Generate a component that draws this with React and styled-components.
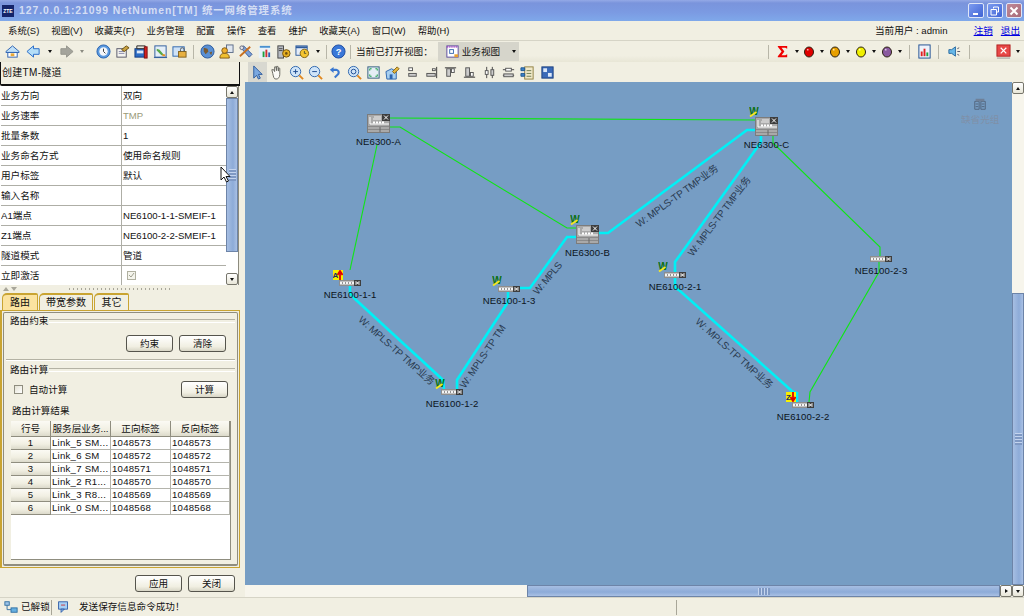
import styled, { createGlobalStyle } from "styled-components";

const FONT = `"Liberation Sans", "Noto Sans CJK SC", sans-serif`;
const CREAM = "#f1efe2";

const GlobalStyle = createGlobalStyle`
  html, body {
    margin: 0;
    padding: 0;
    background: ${CREAM};
  }
  * {
    box-sizing: border-box;
  }
`;

const Window = styled.div`
  position: relative;
  width: 1024px;
  height: 616px;
  display: flex;
  flex-direction: column;
  overflow: hidden;
  background: ${CREAM};
  color: #111;
  font-family: ${FONT};
  font-size: 9.6px;
  line-height: 12px;
`;

/* ---------- title bar ---------- */

const TitleBar = styled.header`
  height: 21px;
  flex: none;
  display: flex;
  align-items: center;
  padding: 0 2px;
  gap: 5px;
  background: linear-gradient(#94a9e6 0, #7a94dc 3px, #7b9ae2 12px, #7fa8ea 100%);
`;

const Logo = styled.div`
  width: 12px;
  height: 12px;
  background: #14246a;
  color: #fff;
  font-size: 5px;
  font-weight: bold;
  line-height: 12px;
  text-align: center;
`;

const TitleText = styled.div`
  flex: 1;
  color: #d4def4;
  font-size: 10.4px;
  font-weight: bold;
  letter-spacing: 0.95px;
  white-space: nowrap;
`;

const WinButtons = styled.div`
  display: flex;
  gap: 3px;
`;

const WinButton = styled.div`
  width: 16px;
  height: 15px;
  display: flex;
  align-items: center;
  justify-content: center;
  border: 1px solid #dfe6f8;
  border-radius: 2px;
  background: ${(p) =>
    p.$close
      ? "linear-gradient(135deg, #c08a98, #a86a78)"
      : "linear-gradient(135deg, #7d9cf0, #3f63d4)"};
`;

/* ---------- menu ---------- */

const MenuBar = styled.nav`
  height: 20px;
  flex: none;
  display: flex;
  align-items: center;
  gap: 12px;
  padding: 0 4px 0 8px;
  border-bottom: 1px solid #d6d4c6;
`;

const MenuItem = styled.span`
  font-size: 9.4px;
  white-space: nowrap;
`;

const UserInfo = styled.div`
  margin-left: auto;
  display: flex;
  width: 145px;
`;

const UserName = styled.span`
  flex: 1;
  white-space: pre;
`;

const UserLink = styled.a`
  margin-left: 8px;
  color: #0000e0;
  text-decoration: underline;
`;

/* ---------- toolbars ---------- */

const MainToolbar = styled.div`
  height: 21px;
  flex: none;
  display: flex;
  align-items: center;
  padding-left: 2px;
  background: linear-gradient(${CREAM} 70%, #e8e6d6);
`;

const ToolButton = styled.span`
  width: ${(p) => p.$w || 19}px;
  height: 20px;
  flex: none;
  display: flex;
  align-items: center;
  justify-content: center;
  background: ${(p) => (p.$active ? "#d8d8d0" : "transparent")};
`;

const Separator = styled.span`
  width: ${(p) => p.$w || 9}px;
  height: 18px;
  flex: none;
  display: flex;
  justify-content: center;

  &::before {
    content: "";
    width: 1px;
    background: #b8b6a8;
    margin: 2px 0;
  }
`;

const Gap = styled.span`
  width: ${(p) => p.$w}px;
  flex: none;
`;

const ViewsCaption = styled.span`
  margin: 0 5px 0 4px;
  white-space: nowrap;
`;

const ViewCombo = styled.div`
  width: 81px;
  height: 19px;
  display: flex;
  align-items: center;
  gap: 2px;
  padding-left: 7px;
  background: #d6d5cb;
  white-space: nowrap;
`;

const ComboCaret = styled.span`
  margin-left: auto;
  margin-right: 3px;
  display: flex;
`;

const RightTools = styled.div`
  margin-left: auto;
  display: flex;
  align-items: center;
  padding-right: 1px;
`;

const CARET_BORDERS = {
  down: (c) => `border-left: 2.5px solid transparent; border-right: 2.5px solid transparent; border-top: 3px solid ${c};`,
  up: (c) => `border-left: 2.5px solid transparent; border-right: 2.5px solid transparent; border-bottom: 3px solid ${c};`,
  right: (c) => `border-top: 2.5px solid transparent; border-bottom: 2.5px solid transparent; border-left: 3px solid ${c};`,
};

const Caret = styled.span`
  width: 0;
  height: 0;
  ${(p) => CARET_BORDERS[p.$dir || "down"](p.$muted ? "#8a8a80" : "#111")}
`;

const ViewToolbar = styled.div`
  height: 20px;
  flex: none;
  display: flex;
  align-items: center;
  padding-left: 3px;
`;

/* ---------- layout ---------- */

const Body = styled.main`
  flex: 1;
  min-height: 0;
  display: flex;
`;

const LeftPanel = styled.aside`
  width: 240px;
  flex: none;
  display: flex;
  flex-direction: column;
`;

const PanelDivider = styled.div`
  width: 5px;
  flex: none;
  background: ${CREAM};
`;

const Workspace = styled.section`
  flex: 1;
  min-width: 0;
  display: flex;
  flex-direction: column;
`;

const PanelHeader = styled.div`
  height: 24px;
  flex: none;
  padding: 5px 0 0 1px;
  border-left: 1px solid #111;
  border-right: 1px solid #111;
  border-bottom: 2px solid #111;
  border-bottom-left-radius: 2px;
  font-size: 10px;
  letter-spacing: 0.3px;
`;

/* ---------- property table ---------- */

const PropWrap = styled.div`
  height: 199px;
  flex: none;
  display: flex;
  margin-right: 1px;
  padding-left: 1px;
  overflow: hidden;
  background: #fff;
  border-right: 1px solid #8d8b7e;
`;

const PropTable = styled.div`
  width: 225px;
  flex: none;
`;

const PropRow = styled.div`
  height: 20px;
  display: grid;
  grid-template-columns: 121px 1fr;
  border-bottom: 1px solid #aeaea6;
`;

const PropCell = styled.div`
  display: flex;
  align-items: center;
  padding-left: ${(p) => (p.$value ? "1px" : "0")};
  border-right: ${(p) => (p.$value ? "none" : "1px solid #aeaea6")};
  color: ${(p) => (p.$dim ? "#9a9a78" : "#111")};
  white-space: nowrap;
  overflow: hidden;
`;

const Scroll = styled.div`
  flex: none;
  display: flex;
  flex-direction: ${(p) => (p.$horizontal ? "row" : "column")};
  ${(p) => (p.$horizontal ? "height: 12px;" : "width: 12px;")}
  background: ${(p) => p.$track || "#f7f5ec"};
`;

const ScrollArrow = styled.div`
  flex: none;
  width: ${(p) => (p.$horizontal ? "12px" : "100%")};
  height: ${(p) => (p.$horizontal ? "100%" : "12px")};
  display: flex;
  align-items: center;
  justify-content: center;
  background: linear-gradient(#fff, #e8e6d8);
  border: 1px solid #77766c;
  border-radius: 2px;
`;

const ScrollSpace = styled.div`
  flex: ${(p) => (p.$size ? `0 0 ${p.$size}px` : "1")};
`;

const ScrollThumb = styled.div`
  flex: ${(p) => (p.$size ? `0 0 ${p.$size}px` : "1")};
  display: flex;
  align-items: center;
  justify-content: center;
  border: 1px solid #6d84a8;
  background: ${(p) =>
    p.$horizontal
      ? "linear-gradient(#a6bee2, #8dabd8 60%, #a9c0e4)"
      : "linear-gradient(90deg, #a6bee2, #8dabd8 60%, #a9c0e4)"};

  &::after {
    content: "";
    ${(p) =>
      p.$horizontal
        ? "width: 12px; height: 7px; background: repeating-linear-gradient(90deg, #c4d4ee 0 1px, #7f99c4 1px 3px);"
        : "width: 7px; height: 12px; background: repeating-linear-gradient(#c4d4ee 0 1px, #7f99c4 1px 3px);"}
  }
`;

const Grip = styled.div`
  height: 8px;
  flex: none;
  display: flex;
  align-items: center;
  gap: 2px;
  padding-left: 3px;
`;

const GripArrow = styled.span`
  width: 0;
  height: 0;
  border-left: 3px solid transparent;
  border-right: 3px solid transparent;
  ${(p) => (p.$up ? "border-bottom" : "border-top")}: 4px solid #a8a69a;
`;

const GripDots = styled.span`
  width: 102px;
  height: 2px;
  margin-left: 50px;
  background: repeating-linear-gradient(90deg, #a8a69a 0 1px, transparent 1px 4px);
`;

/* ---------- tabs ---------- */

const TabStrip = styled.div`
  height: 17px;
  flex: none;
  display: flex;
  padding-left: 2px;
  gap: 1px;
`;

const Tab = styled.div`
  width: ${(p) => p.$w}px;
  display: flex;
  align-items: center;
  justify-content: center;
  border: 1px solid #c9a432;
  border-bottom: none;
  border-top-width: 2px;
  border-radius: 5px 2px 0 0;
  background: ${(p) => (p.$active ? "#fbe3a0" : CREAM)};
  font-size: 10px;
`;

const TabPanel = styled.div`
  height: 258px;
  flex: none;
  padding: 1px;
  border: 1px solid #c9a432;
  border-left-width: 2px;
`;

const Frame = styled.div`
  height: 100%;
  padding: 1px 2px 0;
  border: 1px solid #8f8d7f;
  border-bottom-width: 2px;
  border-radius: 2px;
`;

const GroupTitle = styled.div`
  height: 12px;
  display: flex;
  align-items: center;
  gap: 1px;
  margin-top: ${(p) => p.$top}px;
  padding-left: 4px;
  white-space: nowrap;

  &::after {
    content: "";
    flex: 1;
    height: 2px;
    border-top: 1px solid #b4b2a4;
    border-bottom: 1px solid #fff;
  }
`;

const ButtonRow = styled.div`
  display: flex;
  justify-content: flex-end;
  gap: 6px;
  margin-top: 8px;
  padding-right: 9px;
`;

const PushButton = styled.button`
  width: 47px;
  height: 17px;
  padding: 0;
  border: 1px solid #55544c;
  border-radius: 3px;
  background: linear-gradient(#ffffff, ${CREAM} 70%, #d8d6c6);
  color: #111;
  font: inherit;
`;

const Rule = styled.div`
  height: 2px;
  margin-top: 7px;
  border-top: 1px solid #b4b2a4;
  border-bottom: 1px solid #fff;
`;

const CalcRow = styled.div`
  display: flex;
  align-items: center;
  justify-content: space-between;
  margin-top: 5px;
  padding: 0 7px 0 8px;
`;

const CheckLabel = styled.label`
  display: flex;
  align-items: center;
  gap: 6px;
`;

const CheckBox = styled.span`
  width: 9px;
  height: 9px;
  display: block;
  border: 1px solid #8f8d7f;
  background: linear-gradient(135deg, #e4e2d4, #fff);
`;

const Caption = styled.div`
  margin-top: 7px;
  padding-left: 6px;
`;

/* ---------- result table ---------- */

const ResultTable = styled.div`
  width: 220px;
  height: 139px;
  margin: 4px 0 0 5px;
  background: #fff;
  border-right: 1px solid #8f8d7f;
  border-bottom: 1px solid #8f8d7f;
`;

const ResultRow = styled.div`
  display: grid;
  grid-template-columns: 40px 60px 60px 59px;
  height: ${(p) => (p.$head ? "16px" : "13px")};
`;

const HeadCell = styled.div`
  display: flex;
  align-items: center;
  justify-content: center;
  white-space: nowrap;
  overflow: hidden;
  background: linear-gradient(#fbfaf4, ${CREAM} 60%, #dcdacb);
  border-right: 1px solid #8f8d7f;
  border-bottom: 1px solid #8f8d7f;
`;

const DataCell = styled.div`
  padding-left: 1px;
  line-height: 12px;
  letter-spacing: 0.25px;
  white-space: nowrap;
  overflow: hidden;
  border-right: 1px solid #b4b4ac;
  border-bottom: 1px solid #b4b4ac;
`;

const FormFooter = styled.div`
  flex: 1;
  display: flex;
  justify-content: flex-end;
  gap: 6px;
  padding: 7px 5px 0 0;
`;

/* ---------- canvas ---------- */

const CanvasGrid = styled.div`
  flex: 1;
  min-height: 0;
  display: grid;
  grid-template-columns: 1fr 12px;
`;

const CanvasColumn = styled.div`
  min-width: 0;
  display: flex;
  flex-direction: column;
`;

const Canvas = styled.div`
  position: relative;
  flex: 1;
  overflow: hidden;
  background: #769dc4;
`;

const LinkLayer = styled.svg`
  position: absolute;
  inset: 0;
  width: 100%;
  height: 100%;
`;

const LinkLabel = styled.text`
  font-family: ${FONT};
  font-size: 10px;
  fill: #2a3b50;
  dominant-baseline: central;
`;

const Node = styled.div`
  position: absolute;
  left: ${(p) => p.$x - 245}px;
  top: ${(p) => p.$y - 82}px;
  width: ${(p) => (p.$large ? 23 : 22)}px;
  display: flex;
  flex-direction: column;
  align-items: center;
`;

const NodeName = styled.span`
  margin-top: 3px;
  font-size: 9.6px;
  letter-spacing: 0.1px;
  color: #0c1420;
  white-space: nowrap;
`;

const NodeTag = styled.svg`
  position: absolute;
  left: -6px;
  top: -10px;
  width: 10px;
  height: 10px;
`;

const GroupMark = styled.div`
  position: absolute;
  left: 716px;
  top: 15px;
  display: flex;
  flex-direction: column;
  align-items: center;
  gap: 3px;
  color: #7f90a8;
  white-space: nowrap;
`;

const Pointer = styled.svg`
  position: absolute;
  left: 220px;
  top: 166px;
  width: 11px;
  height: 17px;
`;

/* ---------- status bar ---------- */

const StatusBar = styled.footer`
  height: 19px;
  flex: none;
  display: flex;
  align-items: center;
  border-top: 1px solid #d6d4c6;
`;

const StatusCell = styled.div`
  width: ${(p) => p.$w}px;
  height: 15px;
  flex: none;
  display: flex;
  align-items: center;
  gap: ${(p) => p.$gap}px;
  padding-left: ${(p) => p.$pad}px;
  border-right: 1px solid #a8a698;
  white-space: nowrap;
`;

/* ---------- icons ---------- */

const IconSvg = styled.svg`
  width: ${(p) => p.$size}px;
  height: ${(p) => p.$h || p.$size}px;
  display: block;
  flex: none;
`;

const GLYPHS = {
  home: (
    <>
      <path d="M1 8 8 2l7 6v1H1z" fill="#bfe0f8" stroke="#2a5fb0" />
      <rect x="3" y="9" width="10" height="5" fill="#fff" stroke="#2a5fb0" />
      <rect x="6" y="10" width="4" height="3" fill="#e8a838" />
    </>
  ),
  back: <path d="M1 8 8 2v3h6v6H8v3z" fill="#b4def8" stroke="#2468c8" />,
  forward: <path d="M15 8 8 2v3H2v6h6v3z" fill="#a4a49c" stroke="#94948c" />,
  clock: (
    <>
      <circle cx="8" cy="8" r="7" fill="#5a9ae0" stroke="#2a62b0" />
      <circle cx="8" cy="8" r="4.5" fill="#f4f6fa" />
      <path d="M8 5v3l2 2" fill="none" stroke="#333" />
    </>
  ),
  docEdit: (
    <>
      <rect x="2" y="5" width="10" height="9" fill="#f4f4f0" stroke="#556" />
      <path d="M4 8h6M4 10h6" stroke="#88a" />
      <path d="m7 6 5-4 3 2-5 4z" fill="#c8a040" stroke="#6a5010" />
    </>
  ),
  toolbox: (
    <>
      <rect x="1" y="5" width="11" height="9" fill="#2c6cc4" stroke="#123a80" />
      <rect x="3" y="7" width="7" height="3" fill="#dce8f8" />
      <path d="M3 2h9v3H3z" fill="#e8e8e0" stroke="#222" />
      <rect x="11" y="3" width="3" height="12" fill="#d42020" stroke="#801010" />
    </>
  ),
  picture: (
    <>
      <rect x="2" y="2" width="12" height="12" fill="#e4eef8" stroke="#2c5a9c" />
      <path d="m4 5 3 1 5 6-3 0-5-5z" fill="#58a848" />
      <path d="M1 14h14v1H1z" fill="#2c5a9c" />
      <rect x="10" y="11" width="3" height="2" fill="#e89020" />
    </>
  ),
  lockDoc: (
    <>
      <rect x="1" y="3" width="12" height="10" fill="#cfe2f6" stroke="#2c64ae" />
      <rect x="7" y="8" width="8" height="6" fill="#e8b040" stroke="#80601c" />
      <path d="M9 8V6a2 2 0 0 1 4 0v2" fill="none" stroke="#555" />
    </>
  ),
  globe: (
    <>
      <circle cx="8" cy="8" r="7" fill="#5a90d4" stroke="#2c5a9c" />
      <path d="M4 4l4 1 1 3-3 3-2-3zM10 9l3-1-1 4z" fill="#7a5a30" />
    </>
  ),
  userLock: (
    <>
      <rect x="8" y="1" width="7" height="8" fill="#dfe6f0" stroke="#5a6a88" />
      <circle cx="6" cy="7" r="3" fill="#f0b030" stroke="#805810" />
      <path d="M1 15c0-4 2-5 5-5s5 1 5 5z" fill="#f0c030" stroke="#805810" />
    </>
  ),
  wrench: (
    <>
      <path d="M3 4l3-2 9 9-3 3z" fill="#7aa0d8" stroke="#3a5a98" />
      <path d="M2 13 13 3" stroke="#c87020" strokeWidth="2" />
      <circle cx="4" cy="4" r="2" fill="#e0e4ec" stroke="#667" />
    </>
  ),
  chartDoc: (
    <>
      <rect x="2" y="2" width="12" height="13" fill="#e8f2fa" />
      <path d="M3 3h11" stroke="#4a90d0" strokeWidth="2" />
      <rect x="6" y="8" width="2" height="6" fill="#20a040" />
      <rect x="9" y="6" width="2" height="8" fill="#d03030" />
      <rect x="12" y="9" width="2" height="5" fill="#3060b0" />
    </>
  ),
  serverGear: (
    <>
      <rect x="2" y="2" width="6" height="13" fill="#b8bcc4" stroke="#444" />
      <path d="M3 5h4M3 7h4" stroke="#444" />
      <circle cx="11" cy="10" r="4" fill="#e8b020" stroke="#705010" />
      <circle cx="11" cy="10" r="1.4" fill="#705010" />
    </>
  ),
  windowClock: (
    <>
      <rect x="1" y="2" width="12" height="10" fill="#e4ecf8" stroke="#2c5a9c" />
      <path d="M1 3.5h12" stroke="#2c5a9c" strokeWidth="2" />
      <circle cx="10" cy="10" r="4.5" fill="#f4c430" stroke="#806010" />
      <path d="M10 7.5V10h2" fill="none" stroke="#553" />
    </>
  ),
  help: (
    <>
      <circle cx="8" cy="8" r="7" fill="#3a78d8" stroke="#1c4aa0" />
      <text x="8" y="12" fontSize="10" fontWeight="bold" textAnchor="middle" fill="#fff" fontFamily="Liberation Sans">?</text>
    </>
  ),
  viewDoc: (
    <>
      <rect x="2" y="2" width="12" height="12" fill="#fff" stroke="#5a4a9c" />
      <path d="M2 3h12" stroke="#a040c0" strokeWidth="2" strokeDasharray="1 1" />
      <rect x="5" y="6" width="4" height="4" fill="none" stroke="#3a6ab0" />
      <rect x="10" y="11" width="4" height="3" fill="#e8a030" />
    </>
  ),
  select: <path d="M4 1v13l3-3 2 4 2-1-2-4h4z" fill="#7aa8e0" stroke="#2c5a9c" />,
  hand: (
    <path
      d="M4 9 3 5l2 0 1 2V2h1.500l.5 4V1.500h1.500l.5 5V3l1.500.5V10c0 3-1.500 5-4 5S5 13 4 9z"
      fill="#fafaf6"
      stroke="#66665e"
    />
  ),
  zoomIn: (
    <>
      <circle cx="7" cy="7" r="5.500" fill="#cfe4f8" stroke="#2c64ae" />
      <path d="M4.500 7h5M7 4.500v5" stroke="#1c4a90" />
      <path d="m11 11 4 4" stroke="#e08820" strokeWidth="2" />
    </>
  ),
  zoomOut: (
    <>
      <circle cx="7" cy="7" r="5.500" fill="#cfe4f8" stroke="#2c64ae" />
      <path d="M4.500 7h5" stroke="#1c4a90" />
      <path d="m11 11 4 4" stroke="#e08820" strokeWidth="2" />
    </>
  ),
  undo: <path d="M3 5l4-3v2h3a4 4 0 0 1 3 6l-4 4-1.500-1.500L11 9c.7-1 .2-2.500-1-2.500H7v2z" fill="#3a78d0" />,
  zoomFit: (
    <>
      <circle cx="7" cy="7" r="5.500" fill="#cfe4f8" stroke="#2c64ae" />
      <circle cx="7" cy="7" r="2.500" fill="none" stroke="#1c4a90" />
      <path d="m11 11 4 4" stroke="#e08820" strokeWidth="2" />
    </>
  ),
  fitPage: (
    <>
      <rect x="2" y="2" width="12" height="12" fill="#e4eef4" stroke="#2c5a7c" />
      <path d="M4 6V4h2M10 4h2v2M12 10v2h-2M6 12H4v-2" fill="none" stroke="#18a048" />
    </>
  ),
  nodeEdit: (
    <>
      <path d="M1 7 7 4l5 3v8H2z" fill="#a8d0f0" stroke="#2c64ae" />
      <rect x="5" y="10" width="3" height="5" fill="#2c64ae" />
      <path d="m8 7 5-5 2 2-5 5z" fill="#e8b840" stroke="#806010" />
    </>
  ),
  alignLeft: (
    <>
      <rect x="4" y="3" width="4" height="3" fill="#fff" stroke="#555" />
      <rect x="4" y="9" width="8" height="3" fill="#ccc" stroke="#555" />
    </>
  ),
  alignRight: (
    <>
      <path d="M13.500 2v12" stroke="#333" />
      <rect x="9" y="4" width="3" height="2" fill="#fff" stroke="#555" />
      <rect x="3" y="9" width="9" height="3" fill="#ccc" stroke="#555" />
    </>
  ),
  alignTop: (
    <>
      <path d="M2 3h12" stroke="#333" />
      <rect x="4" y="4" width="4" height="8" fill="#ccc" stroke="#555" />
      <rect x="9" y="4" width="3" height="4" fill="#fff" stroke="#555" />
    </>
  ),
  alignBottom: (
    <>
      <path d="M2 13h12" stroke="#333" />
      <rect x="4" y="3" width="4" height="9" fill="#ccc" stroke="#555" />
      <rect x="9" y="8" width="3" height="4" fill="#fff" stroke="#555" />
    </>
  ),
  alignCenterV: (
    <>
      <path d="M5 2v12M11 2v12" stroke="#444" />
      <rect x="3.500" y="6" width="3" height="4" fill="#fff" stroke="#555" />
      <rect x="9.500" y="5" width="3" height="6" fill="#ccc" stroke="#555" />
    </>
  ),
  alignCenterH: (
    <>
      <path d="M2 5h12M2 11h12" stroke="#444" />
      <rect x="5" y="3.500" width="6" height="3" fill="#fff" stroke="#555" />
      <rect x="3" y="9.500" width="10" height="3" fill="#ccc" stroke="#555" />
    </>
  ),
  tree: (
    <>
      <rect x="5" y="2" width="9" height="13" fill="#f0e8c8" stroke="#908040" />
      <path d="M1 3h4v3H1zM1 9h4v3H1z" fill="#3a80c8" stroke="#205890" />
      <path d="M7 6h5M7 9h5M7 12h5" stroke="#6a7a50" />
    </>
  ),
  grid: (
    <>
      <rect x="2" y="2" width="12" height="12" fill="#3a6ab8" stroke="#1c4080" />
      <rect x="3.500" y="3.500" width="4" height="4" fill="#dce8f8" />
      <rect x="8.500" y="8.500" width="4" height="4" fill="#dce8f8" />
    </>
  ),
  sigma: <path d="M3 2h10v3l-2-1H7l3 4-3 4h4l2-1v3H3v-1l4-5-4-5z" fill="#f00000" />,
  chart: (
    <>
      <rect x="2" y="1" width="12" height="14" fill="#eef2fa" stroke="#1c4c90" />
      <rect x="4" y="8" width="2" height="5" fill="#e02020" />
      <rect x="7" y="5" width="2" height="8" fill="#e02020" />
      <rect x="10" y="9" width="2" height="4" fill="#20a040" />
    </>
  ),
  speaker: (
    <>
      <path d="M2 6h3l4-3v10l-4-3H2z" fill="#68b8e8" stroke="#2a6aa0" />
      <path d="M11 5l2-1M11 8h3M11 11l2 1" stroke="#556" />
    </>
  ),
  clear: (
    <>
      <rect x="1" y="1" width="14" height="12" fill="#e84848" stroke="#b02020" />
      <path d="m5 4 6 6m0-6-6 6" stroke="#fff" strokeWidth="1.300" />
      <path d="M1 15h14" stroke="#999" />
    </>
  ),
  link: (
    <>
      <rect x="1" y="2" width="5" height="4" fill="#9ec4e8" stroke="#2a6aa0" />
      <rect x="8" y="9" width="7" height="5" fill="#68b0e0" stroke="#2a6aa0" />
      <path d="M3.500 6v5H8" fill="none" stroke="#2a6aa0" />
    </>
  ),
  message: (
    <>
      <rect x="2" y="1" width="11" height="9" fill="#a8d0f4" stroke="#1c4ca0" />
      <path d="M5 10v4l4-4z" fill="#a8d0f4" stroke="#1c4ca0" />
      <path d="M5 5h5" stroke="#d02020" />
    </>
  ),
  group: (
    <>
      <path d="M2 5h5v9H2zM9 5h5v9H9z" fill="none" stroke="#4e6078" />
      <path d="M3 2h10v3H3z" fill="#6f8098" />
      <path d="M3 8h3M3 11h3M10 8h3M10 11h3" stroke="#4e6078" />
    </>
  ),
};

function Icon({ name, size = 15 }) {
  return (
    <IconSvg viewBox="0 0 16 16" $size={size}>
      {GLYPHS[name]}
    </IconSvg>
  );
}

function AlarmDot({ color }) {
  return (
    <IconSvg viewBox="0 0 12 12" $size={12}>
      <ellipse cx="6" cy="6" rx="4.500" ry="5" fill={color} stroke="#2a2010" />
      <rect x="4" y="3" width="1.500" height="1.500" fill="#fff" opacity=".7" />
    </IconSvg>
  );
}

function DeviceLarge() {
  return (
    <IconSvg viewBox="0 0 23 19" $size={23} $h={19}>
      <rect x=".5" y=".5" width="22" height="18" fill="#a9a9a9" stroke="#7c7c7c" />
      <rect x="15" y="0" width="8" height="7" fill="#3e3e3e" />
      <path d="m17 1.500 4 4m0-4-4 4" stroke="#fff" />
      <path d="M7 3h7M6 5h8" stroke="#eee" />
      <path d="M3 3v7h19" fill="none" stroke="#fff" />
      <path d="M6 8.500h2m1 0h2m1 0h2m1 0h2" stroke="#fff" strokeWidth="2" />
      <path d="M1 12.500h21M1 15.500h21" stroke="#8a8a8a" />
      <path d="M13 13v5" stroke="#666" />
    </IconSvg>
  );
}

function DeviceSmall() {
  return (
    <IconSvg viewBox="0 0 22 6" $size={22} $h={6}>
      <rect width="22" height="6" fill="#8e8e8e" />
      <rect x="1" y="1.500" width="14" height="3" fill="#f4f4f4" />
      <path d="M3 3h1m2 0h1m2 0h1m2 0h1" stroke="#333" />
      <rect x="15" width="7" height="6" fill="#3e3e3e" />
      <path d="m16.500 1 4 4m0-4-4 4M16 3h5" stroke="#fff" strokeWidth=".8" />
    </IconSvg>
  );
}

function Tag({ type }) {
  if (type === "W") {
    return (
      <NodeTag viewBox="0 0 10 10">
        <text x="5" y="7.500" fontSize="10" fontWeight="bold" textAnchor="middle" fill="#0a7012" fontFamily="Liberation Sans">W</text>
        <path d="M1 9.500 7.500 5" stroke="#f6e820" strokeWidth="1.800" />
      </NodeTag>
    );
  }
  const up = type === "A";
  return (
    <NodeTag viewBox="0 0 10 10">
      <rect width="10" height="10" fill="#f8f000" />
      <text x="2.500" y="8" fontSize="8" fontWeight="bold" textAnchor="middle" fill="#1c2c60" fontFamily="Liberation Sans">{up ? "A" : "Z"}</text>
      <path d={up ? "M7 10V3M4.500 5 7 1l2.500 4" : "M7 0v7M4.500 5 7 9l2.500-4"} fill="none" stroke="#e00000" strokeWidth="1.800" />
    </NodeTag>
  );
}

/* ---------- data ---------- */

const TITLE = "127.0.0.1:21099 NetNumen[TM] 统一网络管理系统";

const MENUS = ["系统(S)", "视图(V)", "收藏夹(F)", "业务管理", "配置", "操作", "查看", "维护", "收藏夹(A)", "窗口(W)", "帮助(H)"];

const VIEW_TOOLS = ["select", "hand", "zoomIn", "zoomOut", "undo", "zoomFit", "fitPage", "nodeEdit", "alignLeft", "alignRight", "alignTop", "alignBottom", "alignCenterV", "alignCenterH", "tree", "grid"];

const PROPERTIES = [
  ["业务方向", "双向"],
  ["业务速率", "TMP", true],
  ["批量条数", "1"],
  ["业务命名方式", "使用命名规则"],
  ["用户标签", "默认"],
  ["输入名称", ""],
  ["A1端点", "NE6100-1-1-SMEIF-1"],
  ["Z1端点", "NE6100-2-2-SMEIF-1"],
  ["隧道模式", "管道"],
];

const ROUTES = [
  ["1", "Link_5 SM...", "1048573"],
  ["2", "Link_6 SM", "1048572"],
  ["3", "Link_7 SM...", "1048571"],
  ["4", "Link_2 R1...", "1048570"],
  ["5", "Link_3 R8...", "1048569"],
  ["6", "Link_0 SM...", "1048568"],
];

const NODES = [
  { name: "NE6300-A", x: 367, y: 114, large: true },
  { name: "NE6300-B", x: 576, y: 225, large: true, tag: "W" },
  { name: "NE6300-C", x: 755, y: 117, large: true, tag: "W" },
  { name: "NE6100-1-1", x: 339, y: 280, tag: "A" },
  { name: "NE6100-1-2", x: 441, y: 389, tag: "W" },
  { name: "NE6100-1-3", x: 498, y: 286, tag: "W" },
  { name: "NE6100-2-1", x: 664, y: 272, tag: "W" },
  { name: "NE6100-2-2", x: 792, y: 402, tag: "Z" },
  { name: "NE6100-2-3", x: 870, y: 256 },
];

const GREEN_LINKS = [
  "390,118 755,120",
  "390,127 400,127 567,228 576,228",
  "377,145 350,270",
  "773,135 773,143 880,247 880,256",
  "879,262 879,272 810,392 809,402",
];

const CYAN_LINKS = [
  "598,233 608,233 747,130 755,130",
  "576,237 567,237 530,288 520,288",
  "508,292 508,302 457,380 457,389",
  "350,286 350,293 355,299 443,380 444,389",
  "761,135 761,142 675,262 675,288 679,290 793,392 797,393 797,403",
];

const LINK_LABELS = [
  { text: "W: MPLS-TP TMP业务", x: 360, y: 318, angle: 41.6, length: 98 },
  { text: "W: MPLS-TP TM", x: 462, y: 387, angle: -56, length: 74 },
  { text: "W: MPLS", x: 535, y: 293, angle: -50, length: 39 },
  { text: "W: MPLS-TP TMP业务", x: 637, y: 225, angle: -36, length: 99 },
  { text: "W: MPLS-TP TMP业务", x: 690, y: 255, angle: -53, length: 97 },
  { text: "W: MPLS-TP TMP业务", x: 697, y: 320, angle: 41.7, length: 100 },
];

/* ---------- page ---------- */

function Topology() {
  return (
    <Canvas>
      <LinkLayer viewBox="245 82 767 503">
        {GREEN_LINKS.map((points) => (
          <polyline key={points} points={points} fill="none" stroke="#0fe614" strokeWidth="1.100" />
        ))}
        {CYAN_LINKS.map((points) => (
          <polyline key={points} points={points} fill="none" stroke="#00f0f6" strokeWidth="2.600" />
        ))}
        {LINK_LABELS.map((label) => (
          <LinkLabel
            key={label.x}
            transform={`translate(${label.x} ${label.y}) rotate(${label.angle})`}
            textLength={label.length}
          >
            {label.text}
          </LinkLabel>
        ))}
      </LinkLayer>
      {NODES.map((node) => (
        <Node key={node.name} $x={node.x} $y={node.y} $large={node.large}>
          {node.tag && <Tag type={node.tag} />}
          {node.large ? <DeviceLarge /> : <DeviceSmall />}
          <NodeName>{node.name}</NodeName>
        </Node>
      ))}
      <GroupMark>
        <Icon name="group" size={14} />
        缺省光组
      </GroupMark>
    </Canvas>
  );
}

function PropertyGrid() {
  return (
    <PropWrap>
      <PropTable>
        {PROPERTIES.map(([label, value, dim]) => (
          <PropRow key={label}>
            <PropCell>{label}</PropCell>
            <PropCell $value $dim={dim}>{value}</PropCell>
          </PropRow>
        ))}
        <PropRow>
          <PropCell>立即激活</PropCell>
          <PropCell $value>
            <Gap $w={4} />
            <IconSvg viewBox="0 0 9 9" $size={9}>
              <rect x=".5" y=".5" width="8" height="8" fill="#f4f4ec" stroke="#b0b0a0" />
              <path d="m2 4 2 2 3-4" fill="none" stroke="#a0a090" />
            </IconSvg>
          </PropCell>
        </PropRow>
      </PropTable>
      <Scroll $track="#fff">
        <ScrollArrow><Caret $dir="up" /></ScrollArrow>
        <ScrollThumb $size={154} />
        <ScrollSpace />
        <ScrollArrow><Caret /></ScrollArrow>
      </Scroll>
    </PropWrap>
  );
}

function RoutePanel() {
  return (
    <TabPanel>
      <Frame>
        <GroupTitle $top={1}>路由约束</GroupTitle>
        <ButtonRow>
          <PushButton>约束</PushButton>
          <PushButton>清除</PushButton>
        </ButtonRow>
        <Rule />
        <GroupTitle $top={3}>路由计算</GroupTitle>
        <CalcRow>
          <CheckLabel>
            <CheckBox />
            自动计算
          </CheckLabel>
          <PushButton>计算</PushButton>
        </CalcRow>
        <Caption>路由计算结果</Caption>
        <ResultTable>
          <ResultRow $head>
            <HeadCell>行号</HeadCell>
            <HeadCell>服务层业务...</HeadCell>
            <HeadCell>正向标签</HeadCell>
            <HeadCell>反向标签</HeadCell>
          </ResultRow>
          {ROUTES.map(([row, name, label]) => (
            <ResultRow key={row}>
              <HeadCell>{row}</HeadCell>
              <DataCell>{name}</DataCell>
              <DataCell>{label}</DataCell>
              <DataCell>{label}</DataCell>
            </ResultRow>
          ))}
        </ResultTable>
      </Frame>
    </TabPanel>
  );
}

export default function App() {
  return (
    <Window>
      <GlobalStyle />
      <TitleBar>
        <Logo>ZTE</Logo>
        <TitleText>{TITLE}</TitleText>
        <WinButtons>
          <WinButton>
            <svg width="8" height="8" viewBox="0 0 8 8"><path d="M1 7h5" stroke="#fff" strokeWidth="2" /></svg>
          </WinButton>
          <WinButton>
            <svg width="10" height="10" viewBox="0 0 10 10"><path d="M3.500 2.500V1h5v5H7M1 3.500h5.500V9H1z" fill="none" stroke="#fff" /></svg>
          </WinButton>
          <WinButton $close>
            <svg width="10" height="10" viewBox="0 0 10 10"><path d="m1.500 1.500 7 7m0-7-7 7" stroke="#fff" strokeWidth="2" /></svg>
          </WinButton>
        </WinButtons>
      </TitleBar>

      <MenuBar>
        {MENUS.map((item) => (
          <MenuItem key={item}>{item}</MenuItem>
        ))}
        <UserInfo>
          <UserName>当前用户 : admin</UserName>
          <UserLink>注销</UserLink>
          <UserLink>退出</UserLink>
        </UserInfo>
      </MenuBar>

      <MainToolbar>
        <ToolButton $w={21}><Icon name="home" /></ToolButton>
        <ToolButton $w={21}><Icon name="back" /></ToolButton>
        <ToolButton $w={12}><Caret /></ToolButton>
        <ToolButton $w={20}><Icon name="forward" /></ToolButton>
        <ToolButton $w={12}><Caret $muted /></ToolButton>
        <Gap $w={6} />
        {["clock", "docEdit", "toolbox", "picture", "lockDoc"].map((name) => (
          <ToolButton key={name}><Icon name={name} /></ToolButton>
        ))}
        <Separator />
        {["globe", "userLock", "wrench", "chartDoc", "serverGear", "windowClock"].map((name) => (
          <ToolButton key={name}><Icon name={name} /></ToolButton>
        ))}
        <ToolButton $w={12}><Caret /></ToolButton>
        <Separator $w={5} />
        <ToolButton><Icon name="help" /></ToolButton>
        <Separator $w={4} />
        <ViewsCaption>当前已打开视图：</ViewsCaption>
        <ViewCombo>
          <Icon name="viewDoc" />
          业务视图
          <ComboCaret><Caret /></ComboCaret>
        </ViewCombo>
        <RightTools>
          <Separator />
          <ToolButton><Icon name="sigma" /></ToolButton>
          <ToolButton $w={10}><Caret /></ToolButton>
          <ToolButton $w={13}><AlarmDot color="#e00000" /></ToolButton>
          <ToolButton $w={13}><Caret /></ToolButton>
          <ToolButton $w={13}><AlarmDot color="#e8a000" /></ToolButton>
          <ToolButton $w={13}><Caret /></ToolButton>
          <ToolButton $w={13}><AlarmDot color="#f0f000" /></ToolButton>
          <ToolButton $w={13}><Caret /></ToolButton>
          <ToolButton $w={13}><AlarmDot color="#8a5aa0" /></ToolButton>
          <ToolButton $w={13}><Caret /></ToolButton>
          <Separator $w={7} />
          <ToolButton $w={23}><Icon name="chart" /></ToolButton>
          <Separator $w={5} />
          <ToolButton $w={27}><Icon name="speaker" /></ToolButton>
          <Separator $w={2} />
          <Gap $w={24} />
          <ToolButton><Icon name="clear" /></ToolButton>
          <ToolButton $w={10}><Caret /></ToolButton>
        </RightTools>
      </MainToolbar>

      <Body>
        <LeftPanel>
          <PanelHeader>创建TM-隧道</PanelHeader>
          <PropertyGrid />
          <Grip>
            <GripArrow $up />
            <GripArrow />
            <GripDots />
          </Grip>
          <TabStrip>
            <Tab $w={36} $active>路由</Tab>
            <Tab $w={54}>带宽参数</Tab>
            <Tab $w={35}>其它</Tab>
          </TabStrip>
          <RoutePanel />
          <FormFooter>
            <PushButton>应用</PushButton>
            <PushButton>关闭</PushButton>
          </FormFooter>
        </LeftPanel>
        <PanelDivider />
        <Workspace>
          <ViewToolbar>
            {VIEW_TOOLS.map((name, index) => (
              <ToolButton key={name} $w={19.3} $active={index === 0}>
                <Icon name={name} />
              </ToolButton>
            ))}
          </ViewToolbar>
          <CanvasGrid>
            <CanvasColumn>
              <Topology />
              <Scroll $horizontal>
                <ScrollSpace $size={282} />
                <ScrollThumb $horizontal />
                <ScrollArrow $horizontal><Caret $dir="right" /></ScrollArrow>
              </Scroll>
            </CanvasColumn>
            <Scroll>
              <ScrollArrow><Caret $dir="up" /></ScrollArrow>
              <ScrollSpace $size={199} />
              <ScrollThumb />
              <ScrollArrow><Caret /></ScrollArrow>
            </Scroll>
          </CanvasGrid>
        </Workspace>
      </Body>

      <StatusBar>
        <StatusCell $w={52} $pad={4} $gap={3}>
          <Icon name="link" size={14} />
          已解锁
        </StatusCell>
        <StatusCell $w={625} $pad={5} $gap={9}>
          <Icon name="message" size={13} />
          发送保存信息命令成功！
        </StatusCell>
      </StatusBar>

      <Pointer viewBox="0 0 11 17">
        <path d="M1 1v13l3-3 2.500 5 2-1L6 10.500h4z" fill="#fff" stroke="#111" />
      </Pointer>
    </Window>
  );
}
